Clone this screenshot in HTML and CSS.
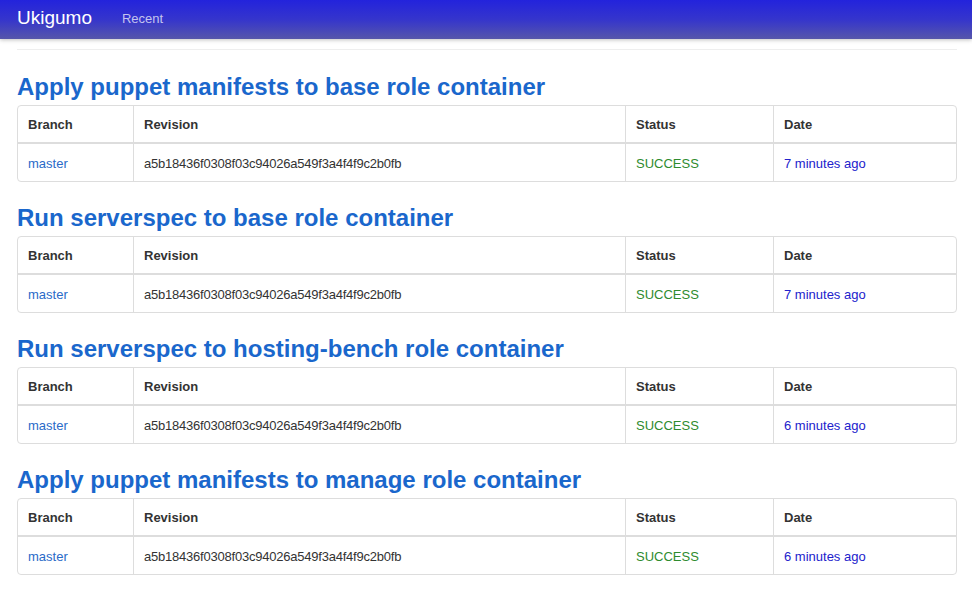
FILE: index.html
```html
<!DOCTYPE html>
<html>
<head>
<meta charset="utf-8">
<title>Ukigumo</title>
<link rel="stylesheet" href="styles.css">
</head>
<body>
<header class="navbar">
  <a class="brand" href="#">Ukigumo</a>
  <a class="nav-link" href="#">Recent</a>
</header>
<main class="container">
  <hr class="rule">
  <section class="job">
    <h2 class="job-title">Apply puppet manifests to base role container</h2>
    <table class="runs">
      <thead><tr><th class="c-branch">Branch</th><th class="c-rev">Revision</th><th class="c-status">Status</th><th class="c-date">Date</th></tr></thead>
      <tbody><tr><td><a class="branch" href="#">master</a></td><td class="rev">a5b18436f0308f03c94026a549f3a4f4f9c2b0fb</td><td class="success">SUCCESS</td><td><a class="date" href="#">7 minutes ago</a></td></tr></tbody>
    </table>
  </section>
  <section class="job">
    <h2 class="job-title">Run serverspec to base role container</h2>
    <table class="runs">
      <thead><tr><th class="c-branch">Branch</th><th class="c-rev">Revision</th><th class="c-status">Status</th><th class="c-date">Date</th></tr></thead>
      <tbody><tr><td><a class="branch" href="#">master</a></td><td class="rev">a5b18436f0308f03c94026a549f3a4f4f9c2b0fb</td><td class="success">SUCCESS</td><td><a class="date" href="#">7 minutes ago</a></td></tr></tbody>
    </table>
  </section>
  <section class="job">
    <h2 class="job-title">Run serverspec to hosting-bench role container</h2>
    <table class="runs">
      <thead><tr><th class="c-branch">Branch</th><th class="c-rev">Revision</th><th class="c-status">Status</th><th class="c-date">Date</th></tr></thead>
      <tbody><tr><td><a class="branch" href="#">master</a></td><td class="rev">a5b18436f0308f03c94026a549f3a4f4f9c2b0fb</td><td class="success">SUCCESS</td><td><a class="date" href="#">6 minutes ago</a></td></tr></tbody>
    </table>
  </section>
  <section class="job">
    <h2 class="job-title">Apply puppet manifests to manage role container</h2>
    <table class="runs">
      <thead><tr><th class="c-branch">Branch</th><th class="c-rev">Revision</th><th class="c-status">Status</th><th class="c-date">Date</th></tr></thead>
      <tbody><tr><td><a class="branch" href="#">master</a></td><td class="rev">a5b18436f0308f03c94026a549f3a4f4f9c2b0fb</td><td class="success">SUCCESS</td><td><a class="date" href="#">6 minutes ago</a></td></tr></tbody>
    </table>
  </section>
</main>
</body>
</html>
```
FILE: styles.css
```css
html, body {
  margin: 0;
  padding: 0;
  background: #fff;
  font-family: "Liberation Sans", Arial, sans-serif;
  font-size: 13px;
  color: #333;
}
a { text-decoration: none; }

.navbar {
  height: 39px;
  display: flex;
  align-items: center;
  padding: 0 17px;
  background: linear-gradient(to bottom, #2323dc 0%, #3535cc 50%, #5656aa 100%);
  box-shadow: 0 1px 4px rgba(0, 0, 0, 0.25);
}
.brand {
  color: #fff;
  font-size: 19px;
  margin-right: 30px;
  margin-top: -3px;
}
.nav-link {
  color: #c4c4ee;
  font-size: 13px;
  margin-top: -3px;
}

.container {
  width: 940px;
  padding: 0 17px;
}
.rule {
  margin: 10px 0 0;
  border: 0;
  border-top: 1px solid #eeeeee;
  height: 1px;
}
.job-title {
  margin: 21px 0 3px;
  font-size: 24px;
  line-height: 30px;
  font-weight: bold;
  color: #1a67cc;
}
.runs {
  width: 100%;
  border-collapse: separate;
  border-spacing: 0;
  border: 1px solid #dddddd;
  border-radius: 4px;
  table-layout: fixed;
}
.runs th, .runs td {
  box-sizing: border-box;
  text-align: left;
  line-height: 18px;
  border-left: 1px solid #dddddd;
}
.runs th { padding: 10px 10px 8px; }
.runs td { padding: 11px 10px 8px; }
.runs th:first-child, .runs td:first-child { border-left: 0; }
.runs th {
  font-weight: bold;
  color: #333;
  border-bottom: 2px solid #dddddd;
}
.c-branch { width: 115px; }
.c-rev { width: 492px; }
.c-status { width: 148px; }
.rev { letter-spacing: -0.22px; }
.branch { color: #2a6ac8; }
.date { color: #2222cc; }
.success { color: #2e8b2e; }
```
